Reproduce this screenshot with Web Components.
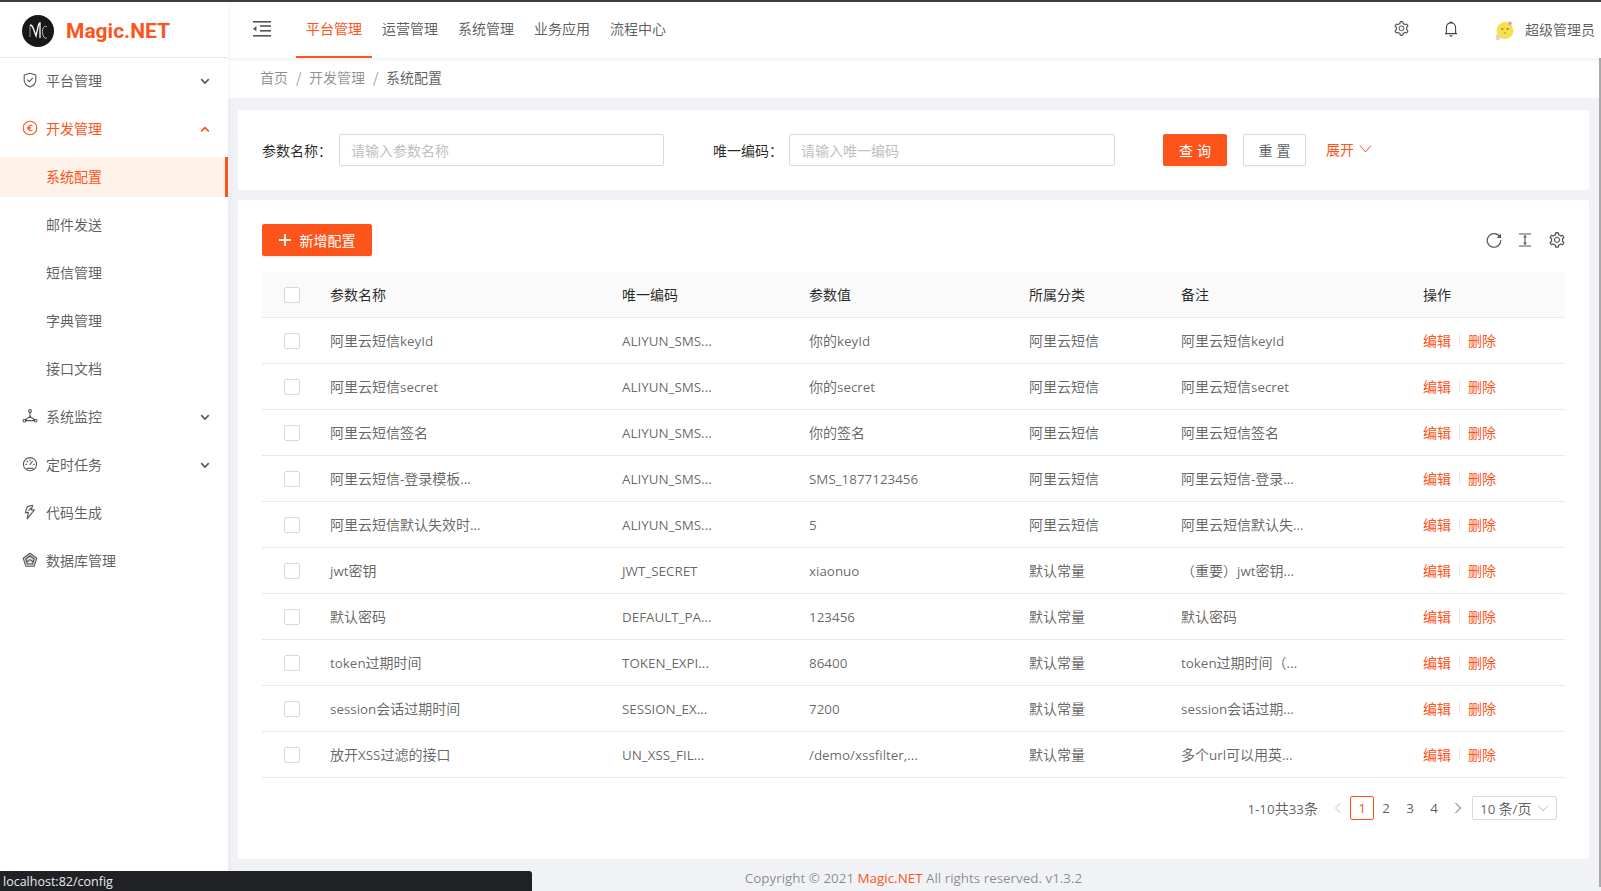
<!DOCTYPE html>
<html lang="zh">
<head>
<meta charset="utf-8">
<title>Magic.NET</title>
<style>
  html, body { margin: 0; height: 891px; overflow: hidden; }
  body {
    font: 14px "Noto Sans CJK SC", "Open Sans", sans-serif;
    color: rgba(0,0,0,.65);
    background: #f0f2f5;
    border-top: 2px solid #3a3d42;
    box-sizing: border-box;
    display: flex;
  }
</style>
</head>
<body>
<side-menu></side-menu>
<main-area></main-area>
<status-tip>localhost:82/config</status-tip>

<script>
const ORANGE = "#fc541b";
const LATIN = `.l { font-family: "Open Sans", sans-serif; font-size: 13.4px; }`;
const GEAR = "M924.8 625.7l-65.5-56c3.1-19 4.7-38.4 4.7-57.8s-1.6-38.8-4.7-57.8l65.5-56a32.03 32.03 0 0 0 9.3-35.2l-.9-2.6a443.74 443.74 0 0 0-79.7-137.9l-1.8-2.1a32.12 32.12 0 0 0-35.1-9.5l-81.3 28.9c-30-24.6-63.5-44-99.7-57.6l-15.7-85a32.05 32.05 0 0 0-25.8-25.7l-2.7-.5c-52.1-9.4-106.9-9.4-159 0l-2.7.5a32.05 32.05 0 0 0-25.8 25.7l-15.8 85.4a351.86 351.86 0 0 0-99 57.4l-81.9-29.1a32 32 0 0 0-35.1 9.5l-1.8 2.1a446.02 446.02 0 0 0-79.7 137.9l-.9 2.6c-4.5 12.5-.8 26.5 9.3 35.2l66.3 56.6c-3.1 18.8-4.6 38-4.6 57.1 0 19.2 1.5 38.4 4.6 57.1L99 625.5a32.03 32.03 0 0 0-9.3 35.2l.9 2.6c18.1 50.4 44.9 96.9 79.7 137.9l1.8 2.1a32.12 32.12 0 0 0 35.1 9.5l81.9-29.1c29.8 24.5 63.1 43.9 99 57.4l15.8 85.4a32.05 32.05 0 0 0 25.8 25.7l2.7.5a449.4 449.4 0 0 0 159 0l2.7-.5a32.05 32.05 0 0 0 25.8-25.7l15.7-85a350 350 0 0 0 99.7-57.6l81.3 28.9a32 32 0 0 0 35.1-9.5l1.8-2.1c34.8-41.1 61.6-87.5 79.7-137.9l.9-2.6c4.5-12.3.8-26.3-9.3-35zM788.3 465.9c2.5 15.1 3.8 30.6 3.8 46.1s-1.3 31-3.8 46.1l-6.6 40.1 74.7 63.9a370.03 370.03 0 0 1-42.6 73.6L721 702.8l-31.4 25.8c-23.9 19.6-50.5 35-79.3 45.8l-38.1 14.3-17.9 97a377.5 377.5 0 0 1-85 0l-17.9-97.2-37.8-14.5c-28.5-10.8-55-26.2-78.7-45.7l-31.4-25.9-93.4 33.2c-17-22.9-31.2-47.6-42.6-73.6l75.5-64.5-6.5-40c-2.4-14.9-3.7-30.3-3.7-45.5 0-15.3 1.2-30.6 3.7-45.5l6.5-40-75.5-64.5c11.3-26.1 25.6-50.7 42.6-73.6l93.4 33.2 31.4-25.9c23.7-19.5 50.2-34.9 78.7-45.7l37.9-14.3 17.9-97.2c28.1-3.2 56.8-3.2 85 0l17.9 97 38.1 14.3c28.7 10.8 55.4 26.2 79.3 45.8l31.4 25.8 92.8-32.9c17 22.9 31.2 47.6 42.6 73.6L781.8 426l6.5 39.9zM512 326c-97.2 0-176 78.8-176 176s78.8 176 176 176 176-78.8 176-176-78.8-176-176-176zm79.2 255.2A111.6 111.6 0 0 1 512 614c-29.9 0-58-11.7-79.2-32.8A111.6 111.6 0 0 1 400 502c0-29.9 11.7-58 32.8-79.2C454 401.6 482.1 390 512 390c29.9 0 58 11.6 79.2 32.8A111.6 111.6 0 0 1 624 502c0 29.9-11.7 58-32.8 79.2z";

// latin runs get their own font so their width fits the reference
function lat(text) {
  return text.replace(/[\x21-\x7e©]+/g, m => `<span class="l">${m}</span>`);
}
// small helper for the 16x16 stroke icons
function strokeIcon(inner, size) {
  size = size || 16;
  return `<svg width="${size}" height="${size}" viewBox="0 0 16 16" fill="none" stroke="currentColor" stroke-width="1.1" stroke-linecap="round" stroke-linejoin="round">${inner}</svg>`;
}
function gearIcon(size) {
  return `<svg width="${size}" height="${size}" viewBox="0 0 1024 1024" fill="currentColor"><path d="${GEAR}"/></svg>`;
}

const MENU_ICONS = {
  shield: strokeIcon('<path d="M8 1.2 13.8 3V8.2C13.8 11.4 10.9 13.8 8 15 5.1 13.8 2.2 11.4 2.2 8.2V3Z"/><path d="M5.6 7.8 7.4 9.6 10.6 6.2"/>'),
  euro: strokeIcon('<circle cx="8" cy="8" r="6.8"/><path d="M10 5.6C8.4 4.6 6.6 5.6 6.4 8 6.6 10.4 8.4 11.4 10 10.4M5.4 7.2H8.8M5.4 8.8H8.4"/>'),
  deploy: strokeIcon('<circle cx="8" cy="3" r="1.4"/><circle cx="2.4" cy="12.6" r="1.4"/><circle cx="13.6" cy="12.6" r="1.4"/><path d="M8 4.4V8.4M8 8.4 3.6 11.8M8 8.4 12.4 11.8M3.8 12.6H12.2"/>'),
  dash: strokeIcon('<circle cx="8" cy="8.2" r="6.6"/><path d="M8 8.6 10.4 5.4M3.6 8.2H4.6M11.4 8.2H12.4M8 3.8V4.8M5 5.2 5.7 5.9M5 12.4H11"/>'),
  bolt: strokeIcon('<path d="M10.8 1.2 5.2 2.6 3.4 8.6 6.4 8.4 5.2 14.8 12.4 5.8 9.2 6Z"/><path d="M6.8 6.4 9 4.2"/>'),
  db: strokeIcon('<path d="M8 1.2 14.8 6.2 12.2 14.2H3.8L1.2 6.2Z" fill="#888" fill-opacity=".25"/><path d="M8 3.8 12.2 7 10.6 12H5.4L3.8 7Z"/><path d="M5.4 9.4 8 7.6 10.6 9.4"/>')
};

/* one line of the side menu */
const template_menuitem = document.createElement("template");
template_menuitem.innerHTML = `
<style>
  :host { display: flex; align-items: center; height: 40px; margin-bottom: 8px; padding: 0 22px 2px; position: relative;
          font-size: 14px; color: rgba(0,0,0,.65); box-sizing: border-box; }
  :host([open]) { color: ${ORANGE}; }
  :host([active]) { color: ${ORANGE}; background: #fff2e8; }
  :host([active])::after { content: ""; position: absolute; right: 0; top: 0; bottom: 0; width: 3px; background: ${ORANGE}; }
  .icon { width: 24px; height: 16px; display: flex; align-items: center; flex: none; }
  .icon:empty { display: none; }
  .label { flex: 1; }
  .arrow { display: flex; margin-right: -4px; margin-top: 1px; }
</style>
<span class="icon"></span><span class="label"><slot></slot></span><span class="arrow"></span>`;
class MenuItem extends HTMLElement {
  constructor() {
    super();
    this.attachShadow({ mode: "open" }).appendChild(template_menuitem.content.cloneNode(true));
  }
  connectedCallback() {
    const name = this.getAttribute("icon");
    this.shadowRoot.querySelector(".icon").innerHTML = name ? MENU_ICONS[name] : "";
    const arrow = this.getAttribute("arrow");
    if (arrow) {
      const d = arrow === "up" ? "M1.2 7.4 5 3.6 8.8 7.4" : "M1.2 3.2 5 7 8.8 3.2";
      this.shadowRoot.querySelector(".arrow").innerHTML =
        `<svg width="10" height="10" viewBox="0 0 10 10" fill="none" stroke="currentColor" stroke-width="1.7"><path d="${d}"/></svg>`;
    }
  }
}
customElements.define("menu-item", MenuItem);

/* left column */
const template_sidemenu = document.createElement("template");
template_sidemenu.innerHTML = `
<style>
  :host { display: block; width: 228px; flex: none; background: #fff; box-shadow: 2px 0 6px rgba(0,21,41,.04); position: relative; z-index: 2; }
  .logo { height: 56px; box-sizing: border-box; border-bottom: 1px solid #e8e8e8; display: flex; align-items: center; padding-left: 22px; gap: 12px; padding-top: 3px; }
  .logo span { font: bold 21px "Roboto", "Liberation Sans", sans-serif; color: ${ORANGE}; }
  nav { padding-top: 3px; display: block; }
  menu-item.sub { padding-left: 46px; }
</style>
<div class="logo">
  <svg width="32" height="32" viewBox="0 0 32 32">
    <circle cx="16" cy="16" r="16" fill="#1a1717"/>
    <path d="M8 10C10 10 10.5 11 11.5 14L14 21 16 12C16.4 10 17 8 18 8V23" fill="none" stroke="#fff" stroke-width="1.3"/>
    <path d="M25 12C23 10 20.5 12 20.5 16.5S22.5 25 25 22.5" fill="none" stroke="#ccc" stroke-width=".9"/>
    <path d="M8 10V22" stroke="#ccc" stroke-width=".7"/>
  </svg>
  <span>Magic.NET</span>
</div>
<nav>
  <menu-item icon="shield" arrow="down">平台管理</menu-item>
  <menu-item icon="euro" arrow="up" open>开发管理</menu-item>
  <menu-item class="sub" active>系统配置</menu-item>
  <menu-item class="sub">邮件发送</menu-item>
  <menu-item class="sub">短信管理</menu-item>
  <menu-item class="sub">字典管理</menu-item>
  <menu-item class="sub">接口文档</menu-item>
  <menu-item icon="deploy" arrow="down">系统监控</menu-item>
  <menu-item icon="dash" arrow="down">定时任务</menu-item>
  <menu-item icon="bolt">代码生成</menu-item>
  <menu-item icon="db">数据库管理</menu-item>
</nav>`;
class SideMenu extends HTMLElement {
  constructor() {
    super();
    this.attachShadow({ mode: "open" }).appendChild(template_sidemenu.content.cloneNode(true));
  }
}
customElements.define("side-menu", SideMenu);

/* top bar */
const template_topbar = document.createElement("template");
template_topbar.innerHTML = `
<style>
  :host { display: flex; align-items: stretch; height: 56px; background: #fff; box-shadow: 0 1px 4px rgba(0,21,41,.08); position: relative; z-index: 1; padding-left: 25px; color: rgba(0,0,0,.65); }
  .fold { width: 18px; display: flex; align-items: center; margin-right: 25px; padding-bottom: 3px; }
  .nav { display: flex; flex: 1; }
  .nav a { width: 56px; padding: 0 10px 4px; display: flex; align-items: center; justify-content: center; box-sizing: content-box; }
  .nav a.on { color: ${ORANGE}; box-shadow: inset 0 -2px 0 ${ORANGE}; }
  .right { display: flex; align-items: center; padding-right: 6px; padding-bottom: 3px; }
  .gear { display: flex; margin-right: 34px; color: #595959; }
  .bell { display: flex; margin-right: 37px; color: #444; }
  .avatar { display: flex; margin-right: 11px; margin-top: 5px; }
</style>
<div class="fold">
  <svg width="18" height="16" viewBox="0 0 18 16" fill="#555"><rect y="0" width="18" height="1.6"/><rect x="7" y="4.2" width="11" height="1.6"/><rect x="7" y="9" width="11" height="1.6"/><rect y="14" width="18" height="1.6"/><path d="M0 7.7 3.4 5V10.4Z"/></svg>
</div>
<div class="nav"><a class="on">平台管理</a><a>运营管理</a><a>系统管理</a><a>业务应用</a><a>流程中心</a></div>
<div class="right">
  <span class="gear">${gearIcon(17)}</span>
  <span class="bell">
    <svg width="14" height="16" viewBox="0 0 14 16" fill="none" stroke="currentColor" stroke-width="1.1"><path d="M1 12.6H13M2.4 12.6V6.6C2.4 3.8 4.4 2 7 2S11.6 3.8 11.6 6.6V12.6M5.8 2V1.2H8.2V2M5.6 14.4C6.4 15.2 7.6 15.2 8.4 14.4"/></svg>
  </span>
  <span class="avatar">
    <svg width="19" height="20" viewBox="0 0 19 20">
      <circle cx="10" cy="9.5" r="8.4" fill="#f5e14a"/>
      <circle cx="15" cy="2.4" r="1.8" fill="#d89cc0"/>
      <path d="M1 14C3 12 5 13 5.6 15S4 19.6 2.4 19.4 .4 16 1 14Z" fill="#ecd6a8"/>
      <circle cx="7.4" cy="8" r="1" fill="#8c7b3a"/><circle cx="12.6" cy="8" r="1" fill="#8c7b3a"/>
      <path d="M9 12H11.4" stroke="#b79a3a"/>
    </svg>
  </span>
  <span>超级管理员</span>
</div>`;
class TopBar extends HTMLElement {
  constructor() {
    super();
    this.attachShadow({ mode: "open" }).appendChild(template_topbar.content.cloneNode(true));
  }
}
customElements.define("top-bar", TopBar);

/* breadcrumb */
const template_crumb = document.createElement("template");
template_crumb.innerHTML = `
<style>
  :host { display: flex; align-items: center; height: 40px; background: #fff; padding: 0 0 2px 32px; box-sizing: border-box; color: rgba(0,0,0,.45); }
  i { font-style: normal; margin: 0 8px; width: 5px; text-align: center; }
  b { font-weight: normal; color: rgba(0,0,0,.65); }
</style>
<span>首页</span><i>/</i><span>开发管理</span><i>/</i><b>系统配置</b>`;
class BreadCrumb extends HTMLElement {
  constructor() {
    super();
    this.attachShadow({ mode: "open" }).appendChild(template_crumb.content.cloneNode(true));
  }
}
customElements.define("bread-crumb", BreadCrumb);

/* button: <the-button primary>text</the-button> */
const template_button = document.createElement("template");
template_button.innerHTML = `
<style>
  :host { display: inline-flex; align-items: center; justify-content: center; height: 32px; box-sizing: border-box; border: 1px solid #d9d9d9; border-radius: 2px; background: #fff; color: rgba(0,0,0,.65); gap: 9px; padding-bottom: 1px; box-shadow: 0 2px 0 rgba(0,0,0,.015); }
  :host([primary]) { background: ${ORANGE}; border-color: ${ORANGE}; color: #fff; box-shadow: 0 2px 0 rgba(0,0,0,.045); }
</style>
<slot></slot>`;
class TheButton extends HTMLElement {
  constructor() {
    super();
    this.attachShadow({ mode: "open" }).appendChild(template_button.content.cloneNode(true));
  }
}
customElements.define("the-button", TheButton);

/* query form */
const template_search = document.createElement("template");
template_search.innerHTML = `
<style>
  :host { display: flex; align-items: center; height: 80px; background: #fff; border-radius: 2px; padding: 0 24px; box-sizing: border-box; margin-bottom: 10px; color: rgba(0,0,0,.85); }
  label { width: 77px; flex: none; white-space: nowrap; }
  .box { flex: none; width: 325px; height: 32px; box-sizing: border-box; border: 1px solid #d9d9d9; border-radius: 2px; padding: 0 11px; line-height: 31px; color: #bfbfbf; }
  .second { margin-left: 49px; width: 76px; }
  .box.w { width: 326px; }
  the-button { flex: none; word-spacing: 1px; }
  .q { width: 64px; margin-left: 48px; }
  .r { width: 63px; margin-left: 16px; }
  .more { color: ${ORANGE}; margin-left: 20px; display: flex; align-items: center; gap: 5px; padding-bottom: 3px; }
</style>
<label>参数名称：</label><div class="box">请输入参数名称</div>
<label class="second">唯一编码：</label><div class="box w">请输入唯一编码</div>
<the-button primary class="q">查 询</the-button>
<the-button class="r">重 置</the-button>
<span class="more">展开
  <svg width="13" height="12" viewBox="0 0 13 12" fill="none" stroke="currentColor" stroke-width="1"><path d="M1 2.5 6.5 9 12 2.5"/></svg>
</span>`;
class SearchPanel extends HTMLElement {
  constructor() {
    super();
    this.attachShadow({ mode: "open" }).appendChild(template_search.content.cloneNode(true));
  }
}
customElements.define("search-panel", SearchPanel);

/* one table row */
const template_row = document.createElement("template");
template_row.innerHTML = `
<style>
  ${LATIN}
  :host { display: grid; grid-template-columns: 52px 292px 187px 220px 152px 242px 158px; height: 46px; align-items: center; box-sizing: border-box; border-bottom: 1px solid #e8e8e8; color: rgba(0,0,0,.62); }
  :host([head]) { background: #fafafa; color: rgba(0,0,0,.85); border-radius: 2px 2px 0 0; }
  .cell { padding: 0 0 2px 16px; white-space: nowrap; }
  .check { width: 16px; height: 16px; box-sizing: border-box; border: 1px solid #d9d9d9; border-radius: 2px; background: #fff; margin-left: 22px; }
  .ops { color: ${ORANGE}; display: flex; align-items: center; }
  .ops i { width: 1px; height: 14px; background: #e8e8e8; margin: 0 8px; }
</style>`;
class ConfigRow extends HTMLElement {
  constructor() {
    super();
    this.attachShadow({ mode: "open" }).appendChild(template_row.content.cloneNode(true));
  }
  connectedCallback() {
    const cols = (this.getAttribute("cols") || "").split("|");
    let html = `<div class="check"></div>`;
    cols.forEach(c => { html += `<div class="cell">${lat(c)}</div>`; });
    html += this.hasAttribute("head")
      ? `<div class="cell">操作</div>`
      : `<div class="cell ops"><span>编辑</span><i></i><span>删除</span></div>`;
    this.shadowRoot.innerHTML += html;
  }
}
customElements.define("config-row", ConfigRow);

/* pagination */
const template_pager = document.createElement("template");
template_pager.innerHTML = `
<style>
  ${LATIN}
  :host { display: flex; align-items: center; justify-content: flex-end; height: 24px; margin-top: 18px; color: rgba(0,0,0,.65); }
  .total { margin-right: 8px; }
  .p { width: 24px; height: 24px; box-sizing: border-box; display: flex; align-items: center; justify-content: center; }
  .on { border: 1px solid ${ORANGE}; border-radius: 2px; color: ${ORANGE}; }
  .dim { color: #bfbfbf; }
  .sel { width: 85px; height: 24px; margin-left: 2px; box-sizing: border-box; border: 1px solid #d9d9d9; border-radius: 2px; display: flex; align-items: center; justify-content: space-between; padding: 0 7px; }
  .sel svg { color: #bfbfbf; }
</style>
<span class="total">${lat("1-10共33条")}</span>
<span class="p dim"><svg width="10" height="12" viewBox="0 0 10 12" fill="none" stroke="currentColor"><path d="M7.5 1 2.5 6 7.5 11"/></svg></span>
<span class="p on">${lat("1")}</span><span class="p">${lat("2")}</span><span class="p">${lat("3")}</span><span class="p">${lat("4")}</span>
<span class="p"><svg width="10" height="12" viewBox="0 0 10 12" fill="none" stroke="currentColor"><path d="M2.5 1 7.5 6 2.5 11"/></svg></span>
<span class="sel"><span>${lat("10 条/页")}</span><svg width="12" height="12" viewBox="0 0 12 12" fill="none" stroke="currentColor"><path d="M1 3.5 6 9 11 3.5"/></svg></span>`;
class PageBar extends HTMLElement {
  constructor() {
    super();
    this.attachShadow({ mode: "open" }).appendChild(template_pager.content.cloneNode(true));
  }
}
customElements.define("page-bar", PageBar);

/* the table card */
const ROWS = [
  "阿里云短信keyId|ALIYUN_SMS...|你的keyId|阿里云短信|阿里云短信keyId",
  "阿里云短信secret|ALIYUN_SMS...|你的secret|阿里云短信|阿里云短信secret",
  "阿里云短信签名|ALIYUN_SMS...|你的签名|阿里云短信|阿里云短信签名",
  "阿里云短信-登录模板...|ALIYUN_SMS...|SMS_1877123456|阿里云短信|阿里云短信-登录...",
  "阿里云短信默认失效时...|ALIYUN_SMS...|5|阿里云短信|阿里云短信默认失...",
  "jwt密钥|JWT_SECRET|xiaonuo|默认常量|（重要）jwt密钥...",
  "默认密码|DEFAULT_PA...|123456|默认常量|默认密码",
  "token过期时间|TOKEN_EXPI...|86400|默认常量|token过期时间（...",
  "session会话过期时间|SESSION_EX...|7200|默认常量|session会话过期...",
  "放开XSS过滤的接口|UN_XSS_FIL...|/demo/xssfilter,...|默认常量|多个url可以用英..."
];
const template_table = document.createElement("template");
template_table.innerHTML = `
<style>
  :host { display: block; height: 659px; box-sizing: border-box; background: #fff; border-radius: 2px; padding: 24px 24px 0; }
  .tools { display: flex; justify-content: space-between; align-items: center; margin-bottom: 16px; }
  .add { width: 110px; }
  .icons { display: flex; gap: 15px; color: #555; align-items: center; margin-right: -1px; }
  .icons span { display: flex; }
  .icons span:first-child { margin-right: 0; }
  page-bar { padding-right: 8px; }
</style>
<div class="tools">
  <the-button primary class="add">
    <svg width="12" height="12" viewBox="0 0 12 12" fill="#fff"><rect x="5.1" width="1.8" height="12"/><rect y="5.1" width="12" height="1.8"/></svg>
    新增配置
  </the-button>
  <div class="icons">
    <span><svg width="16" height="16" viewBox="0 0 16 16" fill="none" stroke="currentColor" stroke-width="1.2"><path d="M14.2 5.6A6.8 6.8 0 1 0 14.8 8"/><path d="M15 1.6V6H10.8Z" stroke="none" fill="currentColor"/></svg></span>
    <span><svg width="16" height="16" viewBox="0 0 16 16" fill="none" stroke="currentColor" stroke-width="1.1"><path d="M2 2H14M2 14H14M8 3.4V12.6"/><path d="M6.2 5.4 8 3 9.8 5.4ZM6.2 10.6 8 13 9.8 10.6Z" fill="currentColor" stroke="none"/></svg></span>
    <span>${gearIcon(18)}</span>
  </div>
</div>
<div class="rows"></div>
<page-bar></page-bar>`;
class ConfigTable extends HTMLElement {
  constructor() {
    super();
    this.attachShadow({ mode: "open" }).appendChild(template_table.content.cloneNode(true));
  }
  connectedCallback() {
    const box = this.shadowRoot.querySelector(".rows");
    const head = document.createElement("config-row");
    head.setAttribute("head", "");
    head.setAttribute("cols", "参数名称|唯一编码|参数值|所属分类|备注");
    box.appendChild(head);
    ROWS.forEach(r => {
      const row = document.createElement("config-row");
      row.setAttribute("cols", r);
      box.appendChild(row);
    });
  }
}
customElements.define("config-table", ConfigTable);

/* everything right of the side menu */
const template_main = document.createElement("template");
template_main.innerHTML = `
<style>
  :host { display: flex; flex-direction: column; flex: 1; min-width: 0; position: relative; }
  .content { padding: 12px 10px 0; margin-right: 2px; }
  bread-crumb { margin-right: 2px; }
  .foot { text-align: center; margin-right: 2px; margin-top: 10px; color: rgba(0,0,0,.45); font: 13.4px "Open Sans", sans-serif; }
  .foot span { color: ${ORANGE}; }
  .scroll { position: absolute; right: 0; top: 56px; bottom: 4px; width: 2px; background: #a9a9a9; }
</style>
<top-bar></top-bar>
<bread-crumb></bread-crumb>
<div class="content">
  <search-panel></search-panel>
  <config-table></config-table>
</div>
<div class="foot">Copyright © 2021 <span>Magic.NET</span> All rights reserved. v1.3.2</div>
<div class="scroll"></div>`;
class MainArea extends HTMLElement {
  constructor() {
    super();
    this.attachShadow({ mode: "open" }).appendChild(template_main.content.cloneNode(true));
  }
}
customElements.define("main-area", MainArea);

/* browser link tip, sits over the page */
const template_tip = document.createElement("template");
template_tip.innerHTML = `
<style>
  :host { position: fixed; left: 0; bottom: 0; width: 532px; height: 20px; box-sizing: border-box; background: #202124; color: #e8eaed; border-radius: 0 3px 0 0; padding-left: 3px; z-index: 9; font: 12.5px/21px "Open Sans", sans-serif; }
</style>
<slot></slot>`;
class StatusTip extends HTMLElement {
  constructor() {
    super();
    this.attachShadow({ mode: "open" }).appendChild(template_tip.content.cloneNode(true));
  }
}
customElements.define("status-tip", StatusTip);
</script>
</body>
</html>
